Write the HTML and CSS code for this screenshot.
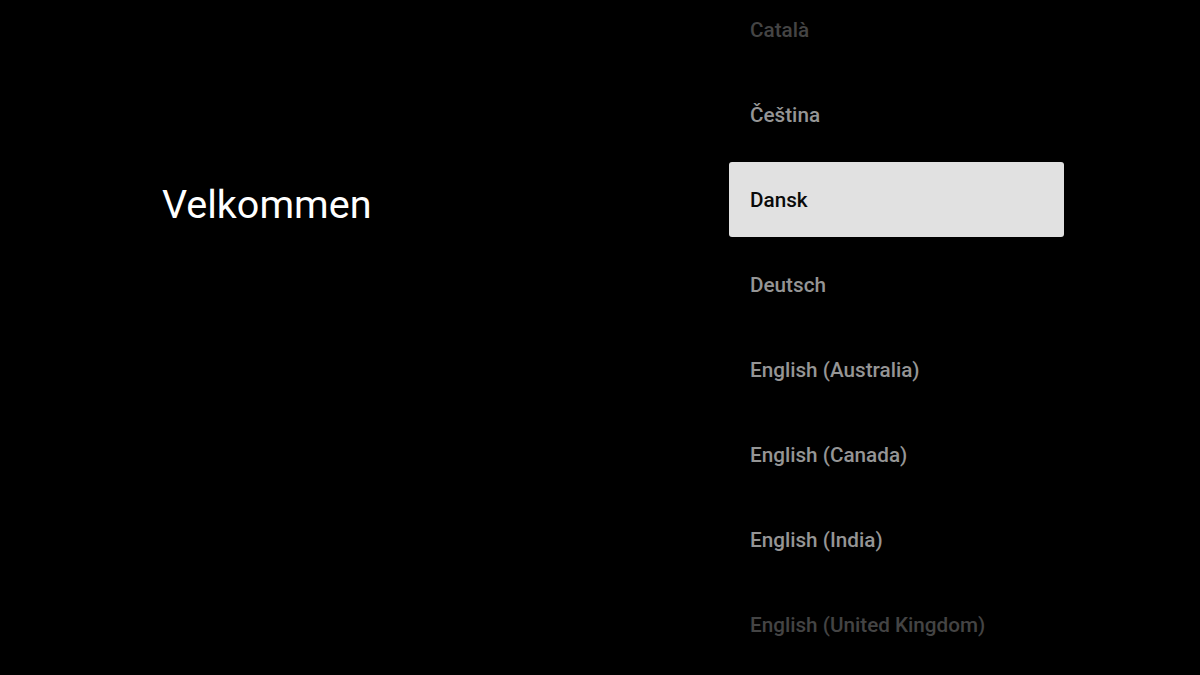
FILE: index.html
```html
<!DOCTYPE html>
<html>
<head>
<meta charset="utf-8">
<link rel="stylesheet" href="styles.css">
</head>
<body>
<div class="screen">
  <div class="intro">
    <h1 class="title">Velkommen</h1>
  </div>
  <ul class="langs">
    <li class="lang faint">Català</li>
    <li class="lang">Čeština</li>
    <li class="lang selected">Dansk</li>
    <li class="lang">Deutsch</li>
    <li class="lang">English (Australia)</li>
    <li class="lang">English (Canada)</li>
    <li class="lang">English (India)</li>
    <li class="lang faint">English (United Kingdom)</li>
  </ul>
</div>
</body>
</html>
```

FILE: styles.css
```css
html, body {
  margin: 0;
  padding: 0;
  background: #000;
  width: 1200px;
  height: 675px;
  overflow: hidden;
}
.screen {
  display: flex;
  width: 1200px;
  height: 675px;
  font-family: Roboto, "Liberation Sans", sans-serif;
}
.intro {
  width: 729px;
  padding-left: 162px;
  box-sizing: border-box;
  padding-top: 162px;
}
.title {
  margin: 0;
  height: 75px;
  display: flex;
  align-items: center;
  padding-top: 10px;
  box-sizing: border-box;
  color: #fff;
  font-weight: 400;
  font-size: 39.5px;
  letter-spacing: 0;
}
.langs {
  list-style: none;
  margin: -8px 0 0 0;
  padding: 0;
  width: 335px;
  display: flex;
  flex-direction: column;
  gap: 10px;
}
.lang {
  height: 75px;
  flex: none;
  display: flex;
  align-items: center;
  padding-left: 21px;
  border-radius: 3px;
  color: #959595;
  font-size: 20.7px;
  font-weight: 500;
}
.lang.faint {
  color: #444;
}
.lang.selected {
  background: #e1e1e1;
  color: #0a0a0a;
}
```
